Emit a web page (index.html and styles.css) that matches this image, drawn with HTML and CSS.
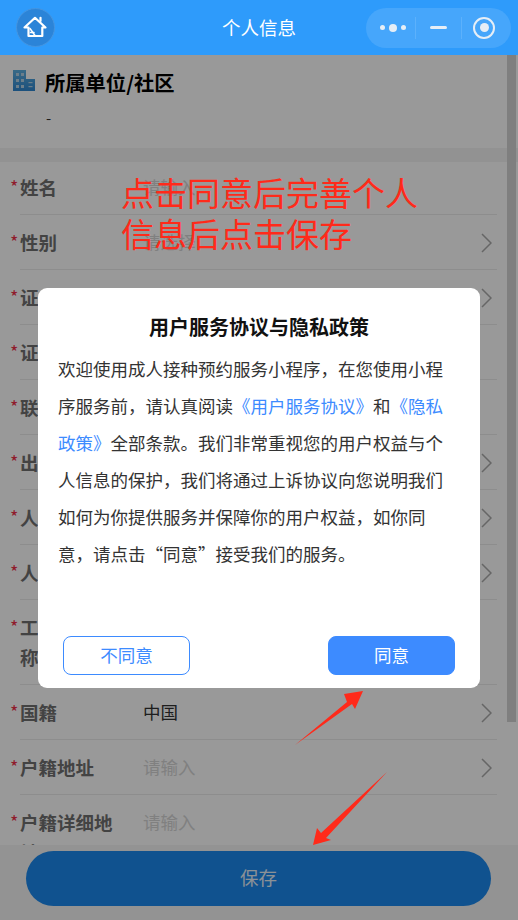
FILE: index.html
```html
<!DOCTYPE html>
<html lang="zh-CN">
<head>
<meta charset="utf-8">
<title>个人信息</title>
<link rel="stylesheet" href="styles.css">
</head>
<body>
<div class="app">
  <header class="nav">
    <div class="home">
      <svg width="26" height="26" viewBox="0 0 26 26" fill="none" stroke="#fff" stroke-width="2.200" stroke-linejoin="round" stroke-linecap="round">
        <path d="M2.500 12.500 13 2.800 23.500 12.500H20.300V21H6.500V12.500Z"/>
        <path d="M18.500 6V2.800"/>
        <path d="M8 13.500 13 20.500" stroke-width="1.500"/>
        <path d="M8.500 17.500H12" stroke-width="1.500"/>
      </svg>
    </div>
    <h1 class="nav-title">个人信息</h1>
    <div class="capsule">
      <div class="cap-cell cap-more">
        <span class="dot"></span><span class="dot dot-big"></span><span class="dot"></span>
      </div>
      <div class="cap-cell cap-split"><span class="minus"></span></div>
      <div class="cap-cell cap-split cap-last"><span class="target"><span class="target-core"></span></span></div>
    </div>
  </header>

  <main class="content">
    <section class="unit">
      <div class="unit-head">
        <svg class="unit-icon" width="22" height="21" viewBox="0 0 22 21">
          <defs>
            <linearGradient id="bld" x1="0" y1="0" x2="0" y2="1">
              <stop offset="0" stop-color="#5fb0e0"/>
              <stop offset="1" stop-color="#2e86d0"/>
            </linearGradient>
          </defs>
          <path d="M0 0H13V9H22V21H0Z" fill="url(#bld)"/>
          <g fill="#b5d3e6">
            <rect x="3" y="3" width="3" height="3"/><rect x="8" y="3" width="3" height="3"/>
            <rect x="3" y="9" width="3" height="3"/><rect x="8" y="9" width="3" height="3"/>
            <rect x="3" y="15" width="3" height="3"/><rect x="8" y="15" width="3" height="3"/>
            <rect x="15.500" y="12" width="4" height="1.200"/><rect x="15.500" y="16" width="4" height="1.200"/>
          </g>
        </svg>
        <h2 class="unit-title">所属单位/社区</h2>
      </div>
      <p class="unit-value">-</p>
    </section>

    <form class="form">
      <div class="row"><span class="label">姓名</span><span class="ph">请输入</span></div>
      <div class="row"><span class="label">性别</span><span class="ph">请选择</span><svg class="chev" width="11" height="20" viewBox="0 0 11 20"><path d="M1 1 10 10 1 19"/></svg></div>
      <div class="row"><span class="label">证件类型</span><span class="ph">请选择</span><svg class="chev" width="11" height="20" viewBox="0 0 11 20"><path d="M1 1 10 10 1 19"/></svg></div>
      <div class="row"><span class="label">证件号码</span><span class="ph">请输入</span></div>
      <div class="row"><span class="label">联系电话</span><span class="ph">请输入</span></div>
      <div class="row"><span class="label">出生日期</span><span class="ph">请选择</span><svg class="chev" width="11" height="20" viewBox="0 0 11 20"><path d="M1 1 10 10 1 19"/></svg></div>
      <div class="row"><span class="label">人群分类</span><span class="ph">请选择</span><svg class="chev" width="11" height="20" viewBox="0 0 11 20"><path d="M1 1 10 10 1 19"/></svg></div>
      <div class="row"><span class="label">人员类别</span><span class="ph">请选择</span><svg class="chev" width="11" height="20" viewBox="0 0 11 20"><path d="M1 1 10 10 1 19"/></svg></div>
      <div class="row"><span class="label">工作单位名称</span><span class="ph">请输入</span></div>
      <div class="row"><span class="label">国籍</span><span class="val">中国</span><svg class="chev" width="11" height="20" viewBox="0 0 11 20"><path d="M1 1 10 10 1 19"/></svg></div>
      <div class="row"><span class="label">户籍地址</span><span class="ph">请输入</span><svg class="chev" width="11" height="20" viewBox="0 0 11 20"><path d="M1 1 10 10 1 19"/></svg></div>
      <div class="row"><span class="label">户籍详细地址</span><span class="ph">请输入</span></div>
    </form>
  </main>

  <footer class="foot"><button class="save" type="button">保存</button></footer>

  <div class="scrollbar"></div>
  <div class="mask"></div>

  <p class="note">点击同意后完善个人信息后点击保存</p>

  <div class="dialog">
    <h3 class="dlg-title">用户服务协议与隐私政策</h3>
    <p class="dlg-text">欢迎使用成人接种预约服务小程序，在您使用小程序服务前，请认真阅读<a class="link">《用户服务协议》</a>和<a class="link">《隐私政策》</a>全部条款。我们非常重视您的用户权益与个人信息的保护，我们将通过上诉协议向您说明我们如何为你提供服务并保障你的用户权益，如你同意，请点击“同意”接受我们的服务。</p>
    <div class="dlg-actions">
      <button class="btn btn-ghost" type="button">不同意</button>
      <button class="btn btn-solid" type="button">同意</button>
    </div>
  </div>

  <svg class="arrows" width="518" height="920" viewBox="0 0 518 920">
    <path d="M295 745 347 702 344 694 363 691 355 709 352 704Z"/>
    <path d="M387 772 326 838 331 840 313 845 317 828 321 833Z"/>
  </svg>
</div>
</body>
</html>
```

FILE: styles.css
```css
* { box-sizing: border-box; }
html, body { margin: 0; padding: 0; }
body {
  font-family: "Noto Sans CJK SC", "Noto Sans", "Liberation Sans", sans-serif;
  background: #fff;
}
.app {
  position: relative;
  width: 518px;
  height: 920px;
  overflow: hidden;
  display: flex;
  flex-direction: column;
  background: #fff;
}

/* nav bar */
.nav {
  position: relative;
  z-index: 5;
  flex: 0 0 55px;
  height: 55px;
  background: #2e9bfb;
  display: flex;
  align-items: center;
  justify-content: space-between;
  padding: 0 7px 0 15.500px;
}
.home {
  width: 39px;
  height: 39px;
  border-radius: 50%;
  background: #2b84d8;
  border: 1px solid #4595e0;
  display: flex;
  align-items: center;
  justify-content: center;
}
.nav-title {
  position: absolute;
  left: 0;
  right: 0;
  top: 0;
  margin: 0;
  text-align: center;
  font-size: 18.500px;
  font-weight: 400;
  line-height: 55px;
  color: #fff;
}
.capsule {
  position: relative;
  width: 145px;
  height: 40px;
  border-radius: 20px;
  background: #46a6fb;
  display: grid;
  grid-template-columns: 49px 46px 50px;
  align-items: center;
}
.cap-cell {
  height: 22px;
  display: flex;
  align-items: center;
  justify-content: center;
  gap: 4px;
}
.cap-more { padding-left: 5px; }
.cap-last { padding-right: 5px; }
.cap-split { border-left: 1px solid #5cb1fc; }
.dot { width: 5px; height: 5px; border-radius: 50%; background: #e6eef6; }
.dot-big { width: 8px; height: 8px; }
.minus { width: 17px; height: 3.500px; border-radius: 2px; background: #e6eef6; }
.target {
  width: 22px;
  height: 22px;
  border-radius: 50%;
  border: 2.500px solid #e6eef6;
  display: flex;
  align-items: center;
  justify-content: center;
}
.target-core { width: 9px; height: 9px; border-radius: 50%; background: #e6eef6; }

/* page content */
.content { flex: 1 1 auto; min-height: 0; overflow: hidden; background: #fff; }
.unit { height: 93px; padding: 15px 13px 0; }
.unit-head { display: flex; align-items: center; gap: 10px; height: 24px; }
.unit-icon { margin-top: -3px; }
.unit-title { margin: 0; font-size: 20.300px; line-height: 24px; font-weight: 700; color: #000; }
.unit-value { margin: 14px 0 0 33px; font-size: 15px; line-height: 20px; color: #333; }

.form { border-top: 14px solid #f3f3f3; padding-left: 20px; padding-right: 21px; }
.row {
  position: relative;
  display: flex;
  align-items: flex-start;
  padding: 12px 0 12px;
  border-bottom: 1px solid #ececec;
}
.row:first-child { padding-top: 10px; }
.label {
  flex: 0 0 124px;
  padding-right: 28px;
  font-size: 18.500px;
  line-height: 30px;
  font-weight: 700;
  color: #707070;
}
.label::before {
  content: "*";
  position: absolute;
  left: -10px;
  font-size: 18px;
  line-height: 28px;
  font-weight: 400;
  color: #f0304a;
}
.ph, .val { flex: 1 1 auto; font-size: 17.500px; line-height: 30px; margin-left: -1px; }
.ph { color: #d6d6d6; }
.val { color: #333; }
.chev {
  flex: 0 0 11px;
  margin: 6px 5px 0 0;
  fill: none;
  stroke: #aaa;
  stroke-width: 1.500;
}

/* footer */
.foot { flex: 0 0 75px; padding: 6px 27px 14px 26px; background: #f5f5f5; }
.save {
  display: block;
  width: 100%;
  height: 55px;
  border: 0;
  border-radius: 28px;
  background: #1b89ee;
  color: #e8f2fb;
  font: inherit;
  font-size: 18.500px;
  padding: 0 0 4px;
}

/* scrollbar + mask */
.scrollbar {
  position: absolute;
  left: 507px;
  top: 55px;
  width: 9px;
  height: 667px;
  background: #d4d4d4;
}
.mask {
  position: absolute;
  left: 0;
  right: 0;
  top: 55px;
  bottom: 0;
  background: rgba(0, 0, 0, .4);
}

.note {
  position: absolute;
  left: 121px;
  top: 172px;
  width: 300px;
  margin: 0;
  font-size: 33px;
  line-height: 41px;
  color: #ff2a1a;
}

/* dialog */
.dialog {
  position: absolute;
  left: 38px;
  top: 288px;
  width: 442px;
  height: 400px;
  border-radius: 9px;
  background: #fff;
  display: flex;
  flex-direction: column;
  padding: 26px 25px 13px;
}
.dlg-title {
  margin: 0;
  text-align: center;
  font-size: 20px;
  line-height: 26px;
  font-weight: 700;
  color: #111;
}
.dlg-text {
  width: 386px;
  margin: 10px 0 0 -5px;
  font-size: 17.500px;
  line-height: 37px;
  color: #333;
}
.link { color: #3d8bff; }
.dlg-actions { margin-top: auto; display: flex; justify-content: space-between; }
.btn {
  width: 127px;
  height: 39px;
  border-radius: 8px;
  border: 1px solid #3d8bff;
  font: inherit;
  font-size: 17.500px;
  padding: 0 0 2px;
}
.btn-ghost { background: #fff; color: #3d8bff; }
.btn-solid { background: #3d8bff; color: #fff; }

.arrows { position: absolute; left: 0; top: 0; pointer-events: none; fill: #ff2a1a; }
```
